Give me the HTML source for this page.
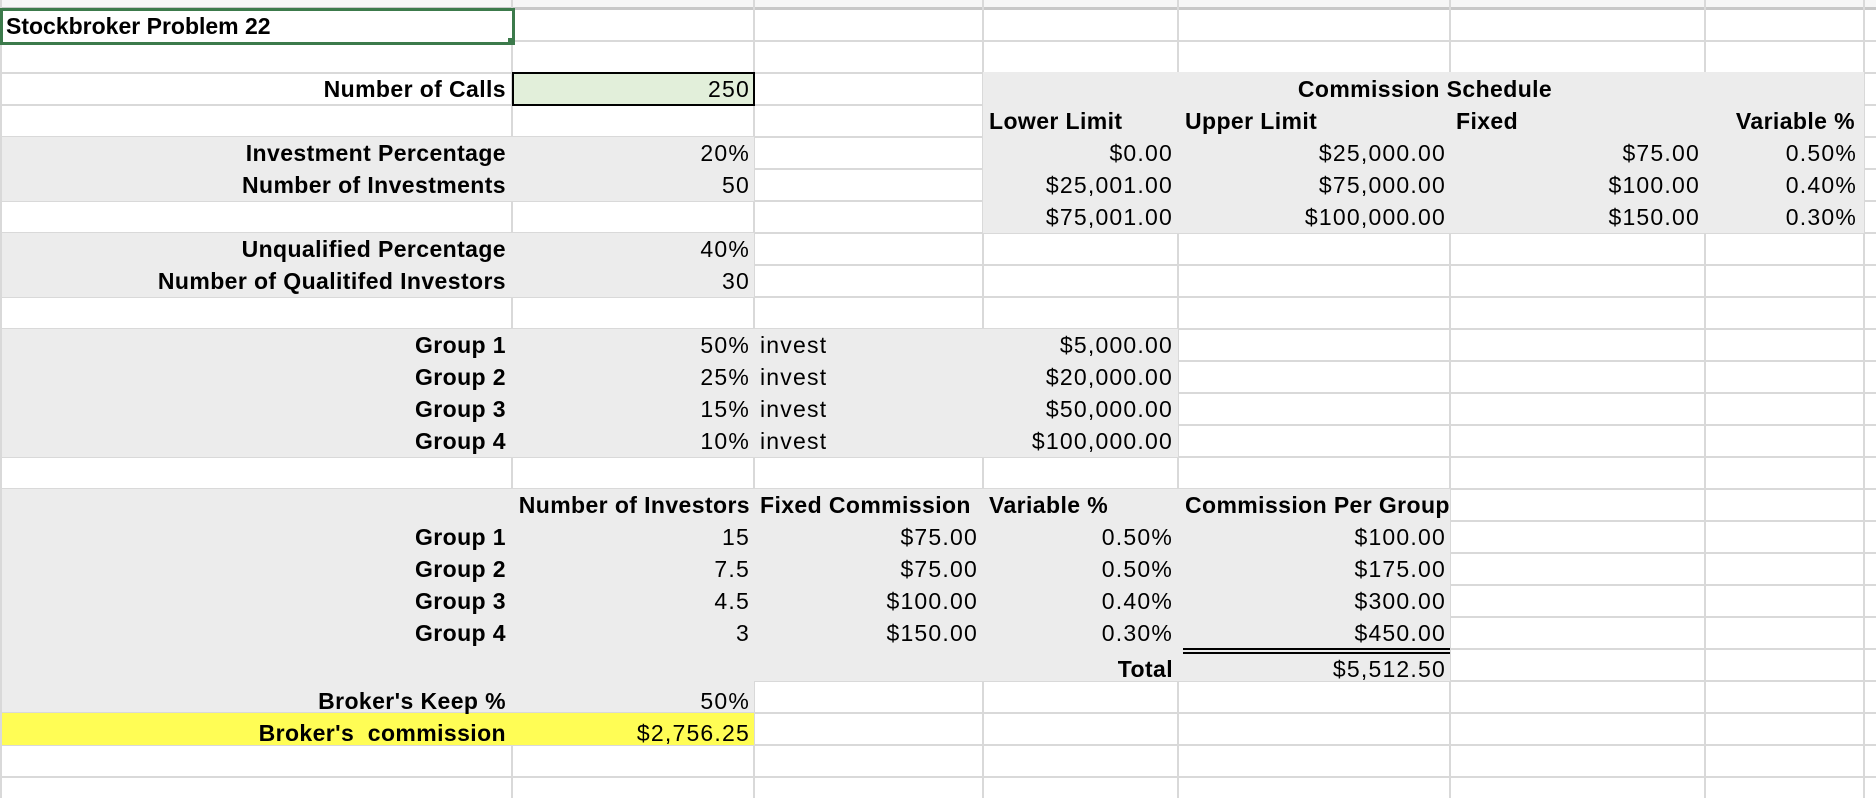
<!DOCTYPE html>
<html><head><meta charset="utf-8"><style>
body{margin:0;width:1876px;height:798px;background:#fff;position:relative;overflow:hidden;font-family:"Liberation Sans",Arial,sans-serif;font-size:23px;letter-spacing:1.2px;color:#000}
.v{position:absolute;top:0;height:798px;width:2px;background:#d9d9d9}
.h{position:absolute;left:0;width:1876px;height:2px;background:#d9d9d9}
.f{position:absolute}
.t{position:absolute;height:32px;line-height:34px;white-space:nowrap}
.b{font-weight:bold;letter-spacing:0.4px}
.r{text-align:right}
</style></head><body>
<div class="h" style="top:0;height:8px;background:#f6f6f6"></div>
<div class="h" style="top:7px;height:3px;background:#c8c8c8"></div>
<div class="h" style="top:40px"></div><div class="h" style="top:72px"></div><div class="h" style="top:104px"></div><div class="h" style="top:136px"></div><div class="h" style="top:168px"></div><div class="h" style="top:200px"></div><div class="h" style="top:232px"></div><div class="h" style="top:264px"></div><div class="h" style="top:296px"></div><div class="h" style="top:328px"></div><div class="h" style="top:360px"></div><div class="h" style="top:392px"></div><div class="h" style="top:424px"></div><div class="h" style="top:456px"></div><div class="h" style="top:488px"></div><div class="h" style="top:520px"></div><div class="h" style="top:552px"></div><div class="h" style="top:584px"></div><div class="h" style="top:616px"></div><div class="h" style="top:648px"></div><div class="h" style="top:680px"></div><div class="h" style="top:712px"></div><div class="h" style="top:744px"></div><div class="h" style="top:776px"></div>
<div class="v" style="left:0"></div><div class="v" style="left:511px"></div><div class="v" style="left:753px"></div><div class="v" style="left:982px"></div><div class="v" style="left:1177px"></div><div class="v" style="left:1449px"></div><div class="v" style="left:1704px"></div><div class="v" style="left:1863px"></div>
<div class="f" style="left:2px;top:137px;width:752px;height:64px;background:#ececec"></div>
<div class="f" style="left:2px;top:233px;width:752px;height:64px;background:#ececec"></div>
<div class="f" style="left:2px;top:329px;width:1176px;height:128px;background:#ececec"></div>
<div class="f" style="left:983px;top:72px;width:881px;height:161px;background:#ececec"></div>
<div class="f" style="left:2px;top:489px;width:1448px;height:192px;background:#ececec"></div>
<div class="f" style="left:2px;top:680px;width:752px;height:32px;background:#ececec"></div>
<div class="f" style="left:2px;top:713px;width:752px;height:32px;background:#fffd55"></div>
<div class="f" style="left:512px;top:72px;width:239px;height:30px;background:#e2efda;border:2px solid #000"></div>
<div class="f" style="left:0;top:8px;width:509px;height:31px;border:3px solid #3c7a4b;background:#fff"></div>
<div class="f" style="left:508px;top:38px;width:6px;height:6px;background:#3c7a4b"></div>
<div class="f" style="left:1183px;top:648px;width:267px;height:2px;background:#000"></div>
<div class="f" style="left:1183px;top:652px;width:267px;height:2px;background:#000"></div>
<div class="t b" style="left:6px;top:9px;letter-spacing:0">Stockbroker Problem 22</div>
<div class="t b r" style="left:0;width:506px;top:72px">Number of Calls</div>
<div class="t r" style="left:512px;width:238px;top:72px">250</div>
<div class="t b" style="left:1225px;width:400px;text-align:center;top:72px">Commission Schedule</div>
<div class="t b" style="left:989px;top:104px">Lower Limit</div>
<div class="t b" style="left:1185px;top:104px">Upper Limit</div>
<div class="t b" style="left:1456px;top:104px">Fixed</div>
<div class="t b r" style="left:1705px;width:150px;top:104px">Variable %</div>
<div class="t b r" style="left:0;width:506px;top:136px">Investment Percentage</div>
<div class="t r" style="left:512px;width:238px;top:136px">20%</div>
<div class="t b r" style="left:0;width:506px;top:168px">Number of Investments</div>
<div class="t r" style="left:512px;width:238px;top:168px">50</div>
<div class="t r" style="left:983px;width:190px;top:136px">$0.00</div>
<div class="t r" style="left:983px;width:190px;top:168px">$25,001.00</div>
<div class="t r" style="left:983px;width:190px;top:200px">$75,001.00</div>
<div class="t r" style="left:1178px;width:268px;top:136px">$25,000.00</div>
<div class="t r" style="left:1178px;width:268px;top:168px">$75,000.00</div>
<div class="t r" style="left:1178px;width:268px;top:200px">$100,000.00</div>
<div class="t r" style="left:1450px;width:250px;top:136px">$75.00</div>
<div class="t r" style="left:1450px;width:250px;top:168px">$100.00</div>
<div class="t r" style="left:1450px;width:250px;top:200px">$150.00</div>
<div class="t r" style="left:1705px;width:152px;top:136px">0.50%</div>
<div class="t r" style="left:1705px;width:152px;top:168px">0.40%</div>
<div class="t r" style="left:1705px;width:152px;top:200px">0.30%</div>
<div class="t b r" style="left:0;width:506px;top:232px">Unqualified Percentage</div>
<div class="t r" style="left:512px;width:238px;top:232px">40%</div>
<div class="t b r" style="left:0;width:506px;top:264px">Number of Qualitifed Investors</div>
<div class="t r" style="left:512px;width:238px;top:264px">30</div>
<div class="t b r" style="left:0;width:506px;top:328px">Group 1</div>
<div class="t b r" style="left:0;width:506px;top:360px">Group 2</div>
<div class="t b r" style="left:0;width:506px;top:392px">Group 3</div>
<div class="t b r" style="left:0;width:506px;top:424px">Group 4</div>
<div class="t r" style="left:512px;width:238px;top:328px">50%</div>
<div class="t r" style="left:512px;width:238px;top:360px">25%</div>
<div class="t r" style="left:512px;width:238px;top:392px">15%</div>
<div class="t r" style="left:512px;width:238px;top:424px">10%</div>
<div class="t" style="left:760px;top:328px">invest</div>
<div class="t" style="left:760px;top:360px">invest</div>
<div class="t" style="left:760px;top:392px">invest</div>
<div class="t" style="left:760px;top:424px">invest</div>
<div class="t r" style="left:983px;width:190px;top:328px">$5,000.00</div>
<div class="t r" style="left:983px;width:190px;top:360px">$20,000.00</div>
<div class="t r" style="left:983px;width:190px;top:392px">$50,000.00</div>
<div class="t r" style="left:983px;width:190px;top:424px">$100,000.00</div>
<div class="t b r" style="left:512px;width:238px;top:488px">Number of Investors</div>
<div class="t b" style="left:760px;top:488px">Fixed Commission</div>
<div class="t b" style="left:989px;top:488px">Variable %</div>
<div class="t b" style="left:1185px;top:488px">Commission Per Group</div>
<div class="t b r" style="left:0;width:506px;top:520px">Group 1</div>
<div class="t b r" style="left:0;width:506px;top:552px">Group 2</div>
<div class="t b r" style="left:0;width:506px;top:584px">Group 3</div>
<div class="t b r" style="left:0;width:506px;top:616px">Group 4</div>
<div class="t r" style="left:512px;width:238px;top:520px">15</div>
<div class="t r" style="left:512px;width:238px;top:552px">7.5</div>
<div class="t r" style="left:512px;width:238px;top:584px">4.5</div>
<div class="t r" style="left:512px;width:238px;top:616px">3</div>
<div class="t r" style="left:754px;width:224px;top:520px">$75.00</div>
<div class="t r" style="left:754px;width:224px;top:552px">$75.00</div>
<div class="t r" style="left:754px;width:224px;top:584px">$100.00</div>
<div class="t r" style="left:754px;width:224px;top:616px">$150.00</div>
<div class="t r" style="left:983px;width:190px;top:520px">0.50%</div>
<div class="t r" style="left:983px;width:190px;top:552px">0.50%</div>
<div class="t r" style="left:983px;width:190px;top:584px">0.40%</div>
<div class="t r" style="left:983px;width:190px;top:616px">0.30%</div>
<div class="t r" style="left:1178px;width:268px;top:520px">$100.00</div>
<div class="t r" style="left:1178px;width:268px;top:552px">$175.00</div>
<div class="t r" style="left:1178px;width:268px;top:584px">$300.00</div>
<div class="t r" style="left:1178px;width:268px;top:616px">$450.00</div>
<div class="t b r" style="left:983px;width:190px;top:652px">Total</div>
<div class="t r" style="left:1178px;width:268px;top:652px">$5,512.50</div>
<div class="t b r" style="left:0;width:506px;top:684px">Broker's Keep %</div>
<div class="t r" style="left:512px;width:238px;top:684px">50%</div>
<div class="t b r" style="left:0;width:506px;top:716px">Broker's&nbsp; commission</div>
<div class="t r" style="left:512px;width:238px;top:716px">$2,756.25</div>
</body></html>
